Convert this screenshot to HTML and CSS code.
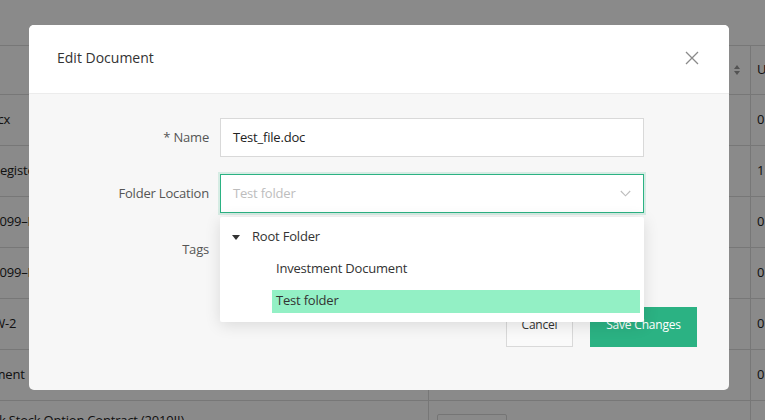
FILE: index.html
```html
<!DOCTYPE html>
<html>
<head>
<meta charset="utf-8">
<link rel="stylesheet" href="styles.css">
</head>
<body>
<div class="page">
  <div class="table">
    <div class="trow thead">
      <div class="c1"></div>
      <div class="c2"><svg class="sort" width="8" height="12" viewBox="0 0 8 12"><path d="M4 1 L7 5 H1 Z" fill="#9a9a9a"/><path d="M4 11 L7 7 H1 Z" fill="#9a9a9a"/></svg></div>
      <div class="c3">U</div>
    </div>
    <div class="trow"><div class="c1"><span class="t o1">Document.docx</span></div><div class="c2"></div><div class="c3">0</div></div>
    <div class="trow"><div class="c1"><span class="t o2">Business Register</span></div><div class="c2"></div><div class="c3">1</div></div>
    <div class="trow"><div class="c1"><span class="t o3">Form 1099–MISC</span></div><div class="c2"></div><div class="c3">0</div></div>
    <div class="trow"><div class="c1"><span class="t o3">Form 1099–NEC</span></div><div class="c2"></div><div class="c3">0</div></div>
    <div class="trow"><div class="c1"><span class="t o5">Form W-2</span></div><div class="c2"></div><div class="c3">0</div></div>
    <div class="trow"><div class="c1"><span class="t o6">Investment Agreement</span></div><div class="c2"></div><div class="c3">0</div></div>
    <div class="trow last"><div class="c1"><span class="t o7">Bank Stock Option Contract (2019II)</span></div><div class="c2"><span class="mini-btn"></span></div><div class="c3">0</div></div>
  </div>
  <div class="overlay"></div>
  <div class="modal">
    <div class="mhead">
      <div class="title">Edit Document</div>
      <svg class="close" width="14" height="14" viewBox="0 0 14 14"><path d="M1 1 L13 13 M13 1 L1 13" stroke="#8a8a8a" stroke-width="1.3" fill="none"/></svg>
    </div>
    <div class="mbody">
      <div class="form">
        <div class="label">* Name</div>
        <div class="input">Test_file.doc</div>
        <div class="label">Folder Location</div>
        <div class="input select"><span>Test folder</span><svg width="11" height="7" viewBox="0 0 11 7"><path d="M0.8 1 L5.5 5.8 L10.2 1" stroke="#bdbdbd" stroke-width="1.1" fill="none"/></svg></div>
        <div class="label">Tags</div>
        <div class="input"></div>
      </div>
      <div class="footer">
        <div class="btn cancel">Cancel</div>
        <div class="btn save">Save Changes</div>
      </div>
      <div class="dropdown">
        <div class="opt root"><svg width="8" height="5" viewBox="0 0 8 5"><path d="M0 0 H8 L4 5 Z" fill="#333"/></svg><span>Root Folder</span></div>
        <div class="opt child"><span class="lbl">Investment Document</span></div>
        <div class="opt child"><span class="lbl selected">Test folder</span></div>
      </div>
    </div>
  </div>
</div>
</body>
</html>
```
FILE: styles.css
```css
html, body {
  margin: 0;
  padding: 0;
}
body {
  font-family: "Open Sans", "Noto Sans", sans-serif;
  font-size: 13px;
  letter-spacing: -0.2px;
  line-height: 1.35;
  color: #222;
}
.page {
  position: relative;
  width: 765px;
  height: 420px;
  overflow: hidden;
  background: #fff;
}
.table {
  padding-top: 45px;
}
.trow {
  display: flex;
  height: 50px;
  border-top: 1px solid #dcdcdc;
}
.thead {
  height: 48px;
}
.c1, .c2, .c3 {
  display: flex;
  align-items: center;
  white-space: nowrap;
  overflow: hidden;
}
.c1 {
  width: 428px;
  border-right: 1px solid #dcdcdc;
}
.c2 {
  width: 322px;
  border-right: 1px solid #dcdcdc;
  justify-content: flex-end;
  padding-right: 9px;
  box-sizing: border-box;
}
.c3 {
  flex: 1;
  padding-left: 6px;
}
.t { display: block; }
.o1 { margin-left: -83px; }
.o2 { margin-left: -63px; }
.o3 { margin-left: -42px; }
.o5 { margin-left: -41px; }
.o6 { margin-left: -110px; }
.o7 { margin-left: -24px; }
.last .c1 {
  align-items: flex-start;
  padding-top: 11px;
}
.last .c2 {
  justify-content: flex-start;
  align-items: flex-start;
  padding: 13px 0 0 8px;
}
.mini-btn {
  display: block;
  width: 70px;
  height: 30px;
  border: 1px solid #d9d9d9;
  border-radius: 2px;
  box-sizing: border-box;
}
.overlay {
  position: absolute;
  inset: 0;
  background: rgba(0, 0, 0, 0.46);
}
.modal {
  position: absolute;
  left: 29px;
  top: 25px;
  width: 700px;
  height: 365px;
  border-radius: 5px;
  overflow: hidden;
  background: #f7f7f7;
}
.mhead {
  height: 69px;
  box-sizing: border-box;
  background: #fff;
  border-bottom: 1px solid #ececec;
  display: flex;
  align-items: center;
  justify-content: space-between;
  padding: 0 30px 2px 28px;
}
.title {
  font-size: 14px;
  letter-spacing: 0;
  color: #333;
}
.mbody {
  position: relative;
  padding: 24px 32px 0 0;
}
.form {
  display: grid;
  grid-template-columns: 180px 424px;
  column-gap: 11px;
  row-gap: 17px;
  align-items: center;
}
.label {
  text-align: right;
  color: #555;
}
.input {
  height: 39px;
  box-sizing: border-box;
  border: 1px solid #d9d9d9;
  background: #fff;
  padding: 0 12px;
  display: flex;
  align-items: center;
  color: #222;
}
.select {
  border-color: #2bb283;
  box-shadow: 0 0 0 2px rgba(43, 178, 131, 0.16);
  justify-content: space-between;
  color: #bdbdbd;
}
.footer {
  display: flex;
  justify-content: flex-end;
  gap: 17px;
  margin-top: 38px;
}
.btn {
  height: 40px;
  box-sizing: border-box;
  display: flex;
  align-items: center;
  justify-content: center;
  font-size: 12px;
  padding-bottom: 4px;
}
.cancel {
  width: 67px;
  background: #fafafa;
  border: 1px solid #d9d9d9;
  color: #333;
}
.save {
  width: 107px;
  background: #2bb283;
  color: #fff;
}
.dropdown {
  position: absolute;
  left: 191px;
  top: 123px;
  width: 424px;
  padding: 4px 0 5px;
  background: #fff;
  border-radius: 2px;
  box-shadow: 0 3px 16px rgba(0, 0, 0, 0.12);
}
.opt {
  height: 32px;
  display: flex;
  align-items: center;
  color: #333;
}
.root {
  padding-left: 12px;
  gap: 12px;
}
.child {
  padding: 0 4px 0 52px;
}
.lbl {
  flex: 1;
  height: 23px;
  display: flex;
  align-items: center;
  padding: 0 4px;
}
.selected {
  background: #93f0c5;
}
```
